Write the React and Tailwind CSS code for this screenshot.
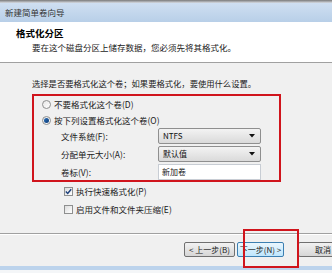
import React from "react";

const FONT = { fontFamily: '"Noto Sans CJK SC", "Noto Sans", sans-serif' };

function Radio({ checked }) {
  return (
    <span className="w-[9px] h-[9px] rounded-full border border-[#8e8f8f] bg-gradient-to-br from-[#e6e6e6] to-[#ffffff] flex items-center justify-center shrink-0">
      {checked && <span className="w-[5px] h-[5px] rounded-full bg-gradient-to-br from-[#2c6fb6] to-[#0d3c78]" />}
    </span>
  );
}

function Check({ checked }) {
  return (
    <span className="w-[9px] h-[9px] border border-[#8e8f8f] bg-gradient-to-br from-[#dcdcdc] to-[#ffffff] flex items-center justify-center shrink-0">
      {checked && (
        <svg width="7" height="7" viewBox="0 0 7 7">
          <path d="M0.8 3.6 L2.7 5.5 L6.2 1.2" fill="none" stroke="#1c3f7a" strokeWidth="1.4" />
        </svg>
      )}
    </span>
  );
}

function Select({ value }) {
  return (
    <div className="w-[103px] h-[16px] rounded-[2px] border border-[#8f8f8f] bg-gradient-to-b from-[#f3f3f3] to-[#dadada] flex items-center pl-[4px] pr-[5px]">
      <span className="flex-1 text-[8px] text-[#111]">{value}</span>
      <svg width="6" height="4" viewBox="0 0 6 4">
        <path d="M0 0 H6 L3 3.5 Z" fill="#111" />
      </svg>
    </div>
  );
}

function Field({ label, children }) {
  return (
    <div className="h-[16px] flex items-center">
      <span className="w-[97px] text-[8.5px] leading-none">{label}</span>
      {children}
    </div>
  );
}

export default function App() {
  return (
    <div className="w-[332px] h-[273px] bg-[#f0f0f0] flex flex-col overflow-hidden relative text-[#1a1a1a]" style={FONT}>
      <div className="h-[3px] bg-gradient-to-b from-[#7a7a7a] to-[#d8dde4]" />
      <div className="h-[19px] bg-gradient-to-b from-[#cfdff1] to-[#b8cfe8] flex items-center pl-[5px] text-[8.5px] text-[#333]">
        新建简单卷向导
      </div>
      <div className="flex-1 flex">
        <div className="w-[3px] bg-[#bcd3ec]" />
        <div className="flex-1 flex flex-col">
          <div className="h-[41px] bg-white border-b border-[#a0a0a0] pl-[16px] pt-[5px]">
            <div className="text-[9.5px] font-bold leading-[12px] text-black">格式化分区</div>
            <div className="text-[8.5px] leading-[12px] ml-[16px] mt-[2px]">要在这个磁盘分区上储存数据，您必须先将其格式化。</div>
          </div>
          <div className="pl-[32px] mt-[14px] text-[8.3px] leading-[12px]">选择是否要格式化这个卷；如果要格式化，要使用什么设置。</div>
          <div className="ml-[32px] mt-[5px] w-[249px] h-[88px] border-2 border-[#d0141c] flex flex-col">
            <div className="h-[16px] flex items-center pl-[8px]">
              <Radio />
              <span className="ml-[3px] text-[8.5px]">不要格式化这个卷(D)</span>
            </div>
            <div className="h-[16px] flex items-center pl-[8px]">
              <Radio checked />
              <span className="ml-[3px] text-[8.5px]">按下列设置格式化这个卷(O)</span>
            </div>
            <div className="pl-[27px] flex flex-col gap-[2px]">
              <Field label="文件系统(F):">
                <Select value="NTFS" />
              </Field>
              <Field label="分配单元大小(A):">
                <Select value="默认值" />
              </Field>
              <Field label="卷标(V):">
                <div className="w-[103px] h-[16px] bg-white border border-[#c8cdd4] flex items-center pl-[3px] text-[8px]">新加卷</div>
              </Field>
            </div>
          </div>
          <div className="pl-[64px] mt-[2px] h-[14px] flex items-center">
            <Check checked />
            <span className="ml-[3px] text-[8.5px]">执行快速格式化(P)</span>
          </div>
          <div className="pl-[64px] mt-[4px] h-[14px] flex items-center">
            <Check />
            <span className="ml-[3px] text-[8.5px]">启用文件和文件夹压缩(E)</span>
          </div>
          <div className="mt-[17px] h-[1px] bg-[#a0a0a0]" />
          <div className="h-[1px] bg-white" />
          <div className="mt-[7px] flex pl-[184px] text-[8px] leading-none">
            <div className="w-[51px] h-[15px] rounded-[2px] border border-[#707070] bg-gradient-to-b from-[#f2f2f2] to-[#d6d6d6] flex items-center justify-center whitespace-nowrap">&lt; 上一步(B)</div>
            <div className="ml-[2px] w-[47px] h-[15px] rounded-[2px] border border-[#3c7fb1] bg-gradient-to-b from-[#eaf6fd] to-[#bee6fd] flex items-center justify-center whitespace-nowrap">下一步(N) &gt;</div>
            <div className="ml-[14px] w-[50px] h-[15px] rounded-[2px] border border-[#707070] bg-gradient-to-b from-[#f2f2f2] to-[#d6d6d6] flex items-center justify-center">取消</div>
          </div>
          <div className="flex-1" />
        </div>
      </div>
      <div className="h-[4px] bg-[#bcd3ec]" />
      <div className="h-[3px] bg-[#f4f6f8]" />
      <div className="absolute left-[243px] top-[229px] w-[56px] h-[39px] border-2 border-[#d0141c]" />
    </div>
  );
}
